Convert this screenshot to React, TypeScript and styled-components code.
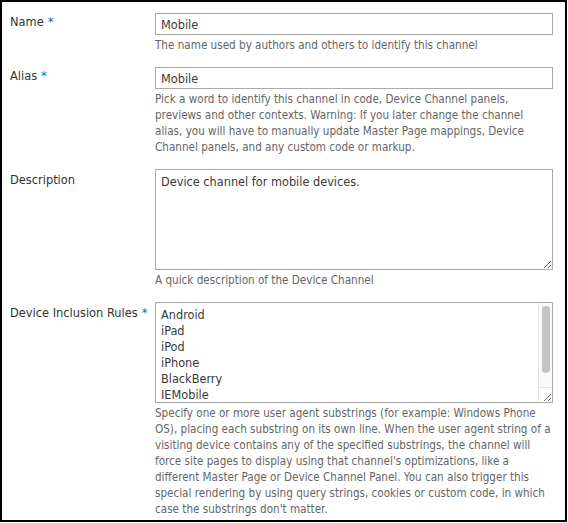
import React from "react"
import styled, { createGlobalStyle } from "styled-components"

const GlobalStyle = createGlobalStyle`
  html, body {
    margin: 0;
    padding: 0;
    background: #fff;
  }
`

const font = `"DejaVu Sans Condensed", "DejaVu Sans", Tahoma, sans-serif`

const Frame = styled.div`
  box-sizing: border-box;
  width: 567px;
  height: 522px;
  border: 2px solid #000;
  padding: 11px 12px 0 8px;
  overflow: hidden;
  font-family: ${font};
  font-size: 11.6px;
  line-height: 16px;
`

const Row = styled.div<{ $first?: boolean }>`
  display: grid;
  grid-template-columns: 145px 1fr;
  padding-top: ${(p) => (p.$first ? 0 : 14)}px;
`

const Label = styled.label<{ $offset?: number }>`
  color: #333;
  font-size: 12.7px;
  padding-top: ${(p) => p.$offset ?? 0}px;
`

const Required = styled.span`
  color: #0072c6;
  margin-left: 4px;
`

const Field = styled.div`
  display: flex;
  flex-direction: column;
  min-width: 0;
`

const TextInput = styled.input`
  box-sizing: border-box;
  width: 100%;
  height: 22px;
  margin: 0;
  border: 1px solid #ababab;
  padding: 0 5px;
  font-family: ${font};
  font-size: 12.6px;
  color: #3a3a3a;
  outline: none;
`

const AreaWrap = styled.div`
  position: relative;
`

const TextArea = styled.textarea<{ $scroll?: boolean }>`
  box-sizing: border-box;
  display: block;
  width: 100%;
  height: 101px;
  margin: 0;
  border: 1px solid #ababab;
  padding: 4px ${(p) => (p.$scroll ? 18 : 5)}px 4px 5px;
  font-family: ${font};
  font-size: 12.6px;
  line-height: 16px;
  color: #3a3a3a;
  outline: none;
  resize: vertical;
  white-space: pre;
  overflow: hidden;
`

/* drawn over the textarea: the headless browser hides native scrollbars */
const ScrollTrack = styled.div`
  position: absolute;
  top: 1px;
  right: 1px;
  bottom: 15px;
  width: 14px;
  box-sizing: border-box;
  background: #fafafa;
  border-left: 1px solid #e4e4e4;
  border-bottom: 1px solid #e4e4e4;
  pointer-events: none;
`

const ScrollThumb = styled.div`
  position: absolute;
  top: 3px;
  left: 3px;
  width: 8px;
  height: 67px;
  border-radius: 4px;
  background: #c4c4c4;
`

const ScrollCorner = styled.div`
  position: absolute;
  right: 1px;
  bottom: 1px;
  width: 14px;
  height: 14px;
  box-sizing: border-box;
  border-left: 1px solid #e4e4e4;
  pointer-events: none;
`

const Help = styled.div`
  margin-top: 2px;
  color: #666;
`

const rules = [
  "Android",
  "iPad",
  "iPod",
  "iPhone",
  "BlackBerry",
  "IEMobile",
  "Windows Phone OS",
].join("\n")

export default function App() {
  return (
    <>
      <GlobalStyle />
      <Frame>
        <Row $first>
          <Label $offset={1}>
            Name<Required>*</Required>
          </Label>
          <Field>
            <TextInput defaultValue="Mobile" />
            <Help>The name used by authors and others to identify this channel</Help>
          </Field>
        </Row>
        <Row>
          <Label $offset={1}>
            Alias<Required>*</Required>
          </Label>
          <Field>
            <TextInput defaultValue="Mobile" />
            <Help>
              Pick a word to identify this channel in code, Device Channel panels, previews and
              other contexts. Warning: If you later change the channel alias, you will have to
              manually update Master Page mappings, Device Channel panels, and any custom code or
              markup.
            </Help>
          </Field>
        </Row>
        <Row>
          <Label $offset={3}>Description</Label>
          <Field>
            <TextArea defaultValue="Device channel for mobile devices." />
            <Help>A quick description of the Device Channel</Help>
          </Field>
        </Row>
        <Row>
          <Label $offset={3}>
            Device Inclusion Rules<Required>*</Required>
          </Label>
          <Field>
            <AreaWrap>
              <TextArea $scroll defaultValue={rules} />
              <ScrollTrack>
                <ScrollThumb />
              </ScrollTrack>
              <ScrollCorner />
            </AreaWrap>
            <Help>
              Specify one or more user agent substrings (for example: Windows Phone OS), placing
              each substring on its own line. When the user agent string of a visiting device
              contains any of the specified substrings, the channel will force site pages to
              display using that channel's optimizations, like a different Master Page or Device
              Channel Panel. You can also trigger this special rendering by using query strings,
              cookies or custom code, in which case the substrings don't matter.
            </Help>
          </Field>
        </Row>
      </Frame>
    </>
  )
}
